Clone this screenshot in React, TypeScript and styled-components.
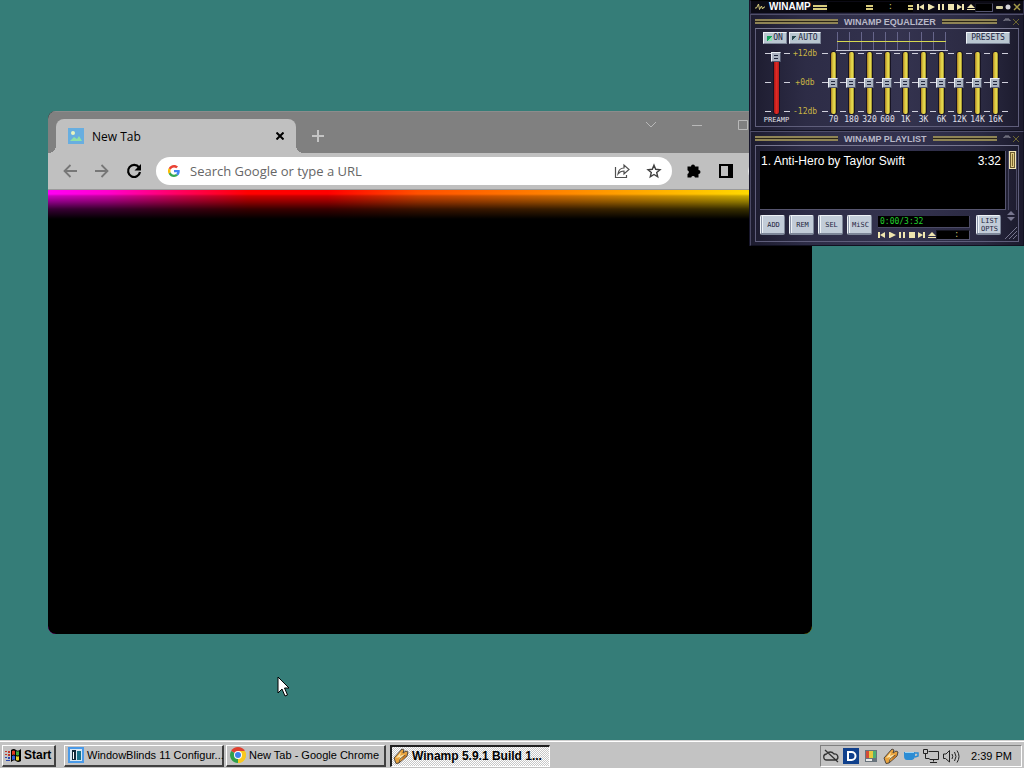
import React from "react";
import styled, { createGlobalStyle, css } from "styled-components";

const GlobalStyle = createGlobalStyle`
  *, *::before, *::after { box-sizing: border-box; }
  body { margin: 0; overflow: hidden; font-family: "Liberation Sans", Arial, sans-serif; }
  button, input { font: inherit; color: inherit; margin: 0; padding: 0; border: 0; background: none; }
  svg { display: block; flex: none; }
`;

const Screen = styled.div`
  display: flex;
  flex-direction: column;
  min-height: 100vh;
  background: #357d78;
`;
const Desktop = styled.main`
  position: relative;
  flex: 1;
`;
const Pointer = styled.svg`
  position: absolute;
  left: 277px;
  top: 676px;
`;

/* ---------- Browser ---------- */
const BrowserWindow = styled.section`
  position: absolute;
  inset: 111px 212px 106px 48px;
  display: flex;
  flex-direction: column;
  border-radius: 8px;
  overflow: hidden;
  background: #000;
  font-family: "Open Sans", "Noto Sans", sans-serif;
`;
const TabStrip = styled.div`
  display: flex;
  align-items: flex-end;
  height: 42px;
  padding: 0 8px;
  background: #808080;
  border-top: 1px solid #8c8c8c;
`;
const Tab = styled.div`
  position: relative;
  display: flex;
  align-items: center;
  gap: 8px;
  width: 240px;
  height: 34px;
  padding: 0 8px 0 12px;
  border-radius: 8px 8px 0 0;
  background: #c0c0c0;
  color: #000;
  font-size: 12px;
  &::before, &::after {
    content: "";
    position: absolute;
    bottom: 0;
    width: 8px;
    height: 8px;
  }
  &::before { left: -8px; background: radial-gradient(circle at 0 0, transparent 8px, #c0c0c0 8px); }
  &::after { right: -8px; background: radial-gradient(circle at 100% 0, transparent 8px, #c0c0c0 8px); }
`;
const TabTitle = styled.span`
  flex: 1;
`;
const IconButton = styled.button<{ $w?: number; $h?: number }>`
  display: flex;
  align-items: center;
  justify-content: center;
  flex: none;
  width: ${(p) => p.$w ?? 32}px;
  height: ${(p) => p.$h ?? 28}px;
`;
const Caption = styled.div`
  display: flex;
  align-self: flex-start;
  margin-left: auto;
`;
const Toolbar = styled.div`
  display: flex;
  align-items: center;
  height: 37px;
  padding: 0 6px;
  background: #c0c0c0;
  border-bottom: 1px solid #9a9a9a;
`;
const Omnibox = styled.label`
  display: flex;
  align-items: center;
  flex: 1;
  height: 28px;
  margin: 0 6px;
  padding: 0 2px 0 12px;
  border-radius: 14px;
  background: #fff;
`;
const UrlInput = styled.input`
  flex: 1;
  min-width: 0;
  margin-left: 10px;
  font-size: 13px;
  outline: 0;
  &::placeholder { color: #666; opacity: 1; }
`;
const Page = styled.div`
  flex: 1;
  background:
    linear-gradient(to bottom, transparent 0, transparent 4px, rgba(0, 0, 0, 0.22) 6px, rgba(0, 0, 0, 0.46) 12px, rgba(0, 0, 0, 0.78) 19px, #000 29px),
    linear-gradient(to right, #ff00f5 0, #f0c 60px, #ff0060 130px, #f00 200px, #f00 280px, #ff5000 370px, #ff8800 520px, #ffd800 700px, #ff0 764px);
`;
const Avatar = styled.span`
  width: 20px;
  height: 20px;
  margin: 0 6px;
  border-radius: 10px;
  background: #e8e8e8;
`;

/* ---------- Winamp ---------- */
const pixelFont = css`
  font-family: "DejaVu Sans Mono", monospace;
`;
const WinampStack = styled.div`
  position: absolute;
  top: 0;
  right: 0;
  width: 275px;
  padding-left: 1px;
  background: #16152a;
  color: #e4e4ee;
`;
const ShadeBar = styled.header`
  display: flex;
  align-items: center;
  height: 14px;
  padding: 0 2px 0 4px;
  background: #0b0a14;
  border: 1px solid #2c2b44;
  border-top-color: #000;
`;
const ShadeName = styled.h1`
  margin: 0 2px 0 4px;
  width: 42px;
  color: #fff;
  font-size: 10px;
  line-height: 12px;
  font-weight: bold;
`;
const GoldBar = styled.span<{ $w: number }>`
  flex: none;
  width: ${(p) => p.$w}px;
  height: 5px;
  border: solid #d8cb7c;
  border-width: 2px 0;
`;
const ShadeScope = styled.div`
  display: flex;
  align-items: center;
  flex: 1;
  justify-content: space-between;
  height: 10px;
  padding-left: 39px;
  background: #000;
`;
const Colon = styled.span`
  ${pixelFont}
  color: #c9c172;
  font-size: 8px;
  line-height: 10px;
`;
const SeekBox = styled.span<{ $w: number; $h: number }>`
  display: flex;
  align-items: center;
  justify-content: flex-end;
  width: ${(p) => p.$w}px;
  height: ${(p) => p.$h}px;
  padding-right: 10px;
  background: #000;
  border: 1px solid;
  border-color: #15151f #555570 #555570 #15151f;
`;
const ControlRow = styled.div`
  display: flex;
  align-items: center;
  gap: 2px;
`;
const Transport = styled.button`
  display: flex;
  width: 8px;
  height: 8px;
  align-items: center;
  justify-content: center;
`;

const Panel = styled.section`
  padding: 0 4px 3px 4px;
  border: 1px solid #111120;
  border-left-color: #4a4964;
  border-top-color: #504f6a;
  background: linear-gradient(to right, #1d1c2f 0, #2d2c46 20%, #34334f 55%, #2a2941 85%, #1b1a2c 100%);
`;
const PanelTitle = styled.header`
  display: flex;
  align-items: center;
  height: 13px;
  gap: 6px;
`;
const PanelName = styled.h2`
  margin: 0;
  color: #b9b9c8;
  font-size: 9px;
  line-height: 12px;
  font-weight: bold;
`;
const Rule = styled.span<{ $w?: number }>`
  flex: ${(p) => (p.$w ? `0 0 ${p.$w}px` : "1")};
  height: 5px;
  background: #2a2416;
  border: solid #8f8455;
  border-width: 2px 0;
`;
const Frame = styled.div`
  border: 1px solid #5f5e7b;
  border-top-color: #77768f;
`;
const EqTop = styled.div`
  display: flex;
  align-items: flex-start;
  height: 21px;
  padding: 3px 6px 0 7px;
`;
const SkinButton = styled.button<{ $w: number; $h?: number }>`
  ${pixelFont}
  display: flex;
  align-items: center;
  justify-content: center;
  gap: 1px;
  flex: none;
  width: ${(p) => p.$w}px;
  height: ${(p) => p.$h ?? 12}px;
  margin-right: 2px;
  border: 1px solid;
  border-color: #eef2f6 #7d8698 #7d8698 #eef2f6;
  background: #b9c6d0;
  color: #1e2540;
  font-size: 8px;
  line-height: 8px;
`;
const Led = styled.span<{ $on?: boolean }>`
  width: 5px;
  height: 5px;
  background: ${(p) => (p.$on ? "linear-gradient(135deg, #12a05a 55%, #8de0b0 55%)" : "linear-gradient(135deg, #2c4a50 50%, #b0c4cc 50%)")};
`;
const Graph = styled.svg`
  margin: 0 auto 0 13px;
`;
const EqBody = styled.div`
  display: flex;
  align-items: flex-start;
  height: 76px;
  padding-left: 9px;
`;
const ticks = (x: number) => css`
  background:
    linear-gradient(#d0d0dc, #d0d0dc) ${x}px 3px / 6px 1px no-repeat,
    linear-gradient(#d0d0dc, #d0d0dc) ${x}px 32px / 6px 1px no-repeat,
    linear-gradient(#d0d0dc, #d0d0dc) ${x}px 61px / 6px 1px no-repeat;
`;
const Band = styled.label`
  ${pixelFont}
  display: flex;
  flex-direction: column;
  align-items: center;
  width: 18px;
  padding-left: 5px;
  ${ticks(0)}
  color: #e0e0ea;
  font-size: 8px;
  line-height: 10px;
  white-space: nowrap;
`;
const Preamp = styled(Band)`
  width: 25px;
  padding: 0 2px 0 0;
  font-size: 7px;
  background:
    linear-gradient(to right, #d0d0dc 6px, transparent 6px, transparent 19px, #d0d0dc 19px) 0 3px / 25px 1px no-repeat,
    linear-gradient(to right, #d0d0dc 6px, transparent 6px, transparent 19px, #d0d0dc 19px) 0 32px / 25px 1px no-repeat,
    linear-gradient(to right, #d0d0dc 6px, transparent 6px, transparent 19px, #d0d0dc 19px) 0 61px / 25px 1px no-repeat;
`;
const EndTicks = styled.span`
  width: 6px;
  height: 66px;
  ${ticks(0)}
`;
const Fader = styled.input<{ $red?: boolean }>`
  appearance: none;
  writing-mode: vertical-lr;
  direction: rtl;
  width: 12px;
  height: 64px;
  margin: 1px 0 0;
  &::-webkit-slider-runnable-track {
    width: 7px;
    height: 64px;
    margin: 0 auto;
    border: 1px solid #171424;
    border-radius: 3px;
    background: ${(p) => (p.$red ? "linear-gradient(to right, #a81818, #e02a24 50%, #b81c1c)" : "linear-gradient(to right, #a87a20, #dccb44 40%, #e4d84c 70%, #8c7e28)")};
  }
  &::-webkit-slider-thumb {
    appearance: none;
    width: 10px;
    height: 10px;
    margin-left: -3px;
    border: 1px solid;
    border-color: #e8ecf2 #50566c #50566c #e8ecf2;
    background:
      linear-gradient(#20263c, #20263c) 50% 2px / 4px 1px no-repeat,
      linear-gradient(#20263c, #20263c) 50% 5px / 4px 1px no-repeat,
      #aab2c0;
  }
`;
const DbScale = styled.div`
  ${pixelFont}
  display: flex;
  flex-direction: column;
  justify-content: space-between;
  width: 29px;
  height: 67px;
  margin: -1px 0 0 3px;
  color: #c9b444;
  font-size: 8px;
  line-height: 9px;
`;
const DbLabel = styled.span`
  width: 24px;
  text-align: center;
`;

const PlaylistBody = styled.div`
  display: flex;
  padding: 5px 1px 0 4px;
`;
const TrackList = styled.ol`
  flex: 1;
  height: 59px;
  margin: 0;
  padding: 2px 4px 0 1px;
  list-style: none;
  background: #000;
  border: solid #55546e;
  border-width: 0 1px 1px 0;
  color: #fff;
  font-size: 12px;
  line-height: 16px;
`;
const Track = styled.li`
  display: flex;
  justify-content: space-between;
`;
const ScrollTrack = styled.div`
  width: 9px;
  margin-left: 2px;
  border: solid #4a4963;
  border-width: 0 1px;
`;
const ScrollThumb = styled.button`
  display: block;
  width: 7px;
  height: 18px;
  background: linear-gradient(#7c6830, #7c6830) 50% 50% / 1px 12px no-repeat, #e0cb84;
  border: 1px solid #f2e6b4;
  outline: 1px solid #6a5a30;
  outline-offset: -2px;
`;
const PlaylistFoot = styled.div`
  display: flex;
  align-items: flex-start;
  height: 31px;
  padding: 5px 1px 0 4px;
`;
const MenuButton = styled(SkinButton)`
  height: 20px;
  margin-right: 4px;
  padding-left: 2px;
  border-width: 1px 1px 2px 1px;
  border-radius: 2px;
  background: linear-gradient(to right, #8b95a8 0, #8b95a8 1px, #eef2f6 1px, #eef2f6 2px, #c2ccd8 2px);
  font-size: 7px;
  white-space: pre-line;
`;
const Readout = styled.div`
  display: flex;
  flex-direction: column;
  gap: 2px;
  margin: 1px 6px 0 2px;
  width: 93px;
`;
const TimeBox = styled.output`
  ${pixelFont}
  height: 12px;
  padding-left: 2px;
  background: #000;
  border: solid #4c4b66;
  border-width: 0 1px 1px 0;
  color: #22d02c;
  font-size: 8px;
  line-height: 11px;
`;
const FootControls = styled.div`
  display: flex;
  align-items: center;
  justify-content: space-between;
`;
const Corner = styled.div`
  display: flex;
  flex-direction: column;
  align-items: center;
  gap: 5px;
  margin: -4px 0 0 auto;
`;

/* ---------- Taskbar ---------- */
const Taskbar = styled.footer`
  display: flex;
  align-items: center;
  height: 28px;
  padding: 3px 2px 1px;
  background: #c3c3c3;
  border-top: 1px solid #d0d0d0;
  box-shadow: inset 0 1px 0 #fff;
  font-size: 11px;
  color: #000;
`;
const TaskButton = styled.button<{ $active?: boolean; $start?: boolean }>`
  display: flex;
  align-items: center;
  gap: ${(p) => (p.$start ? 2 : 3)}px;
  flex: 0 1 ${(p) => (p.$start ? 54 : 160)}px;
  min-width: 0;
  height: 22px;
  margin-right: ${(p) => (p.$start ? 8 : 2)}px;
  padding: 0 3px;
  border: solid;
  border-width: 1px 2px 2px 1px;
  border-color: #fff #404040 #404040 #fff;
  background: #c3c3c3;
  white-space: nowrap;
  ${(p) => p.$start && css`padding: 0 1px 0 2px; font-weight: bold; font-size: 12px;`}
  ${(p) =>
    p.$active &&
    css`
      margin-left: 2px;
      padding-left: 1px;
      border-width: 2px 1px 1px 2px;
      border-color: #202020 #fff #fff #202020;
      background: repeating-conic-gradient(#fff 0 25%, #c8c8c8 0 50%) 0 0 / 2px 2px;
      font-weight: bold;
      font-size: 12px;
    `}
`;
const Tray = styled.div`
  display: flex;
  align-items: center;
  gap: 4px;
  height: 22px;
  margin-left: auto;
  padding: 0 9px 0 2px;
  border: 1px solid;
  border-color: #808080 #fff #fff #808080;
`;
const Clock = styled.time`
  margin-left: 7px;
`;

const NoteIcon = () => (
  <svg width="16" height="16" viewBox="0 0 16 16">
    <path d="M1 10 9 1l2 1-1 3 3-2 2 1-1 4-8 7-3 .500z" fill="#e8a23c" stroke="#4e463e" />
    <path d="M3 10 8 4 7 8l5-2-6 7 1-4z" fill="#ffe6a8" />
    <path d="M10 9l3.500-3-.5 3-5 4z" fill="#c77a24" />
    <path d="M6 15l1-4 5-4" fill="none" stroke="#4e463e" strokeWidth=".8" />
  </svg>
);
const Transports = () => {
  const shapes: [string, string][] = [
    ["Previous", "M0 1h2v6H0zM7 1v6L2 4z"],
    ["Play", "M1 1h1l6 3-6 3H1z"],
    ["Pause", "M1 1h2v6H1zM5 1h2v6H5z"],
    ["Stop", "M1 1h6v6H1z"],
    ["Next", "M5 1h2v6H5zM0 1l5 3-5 3z"],
    ["Eject", "M4 1l4 4H0zM0 6h8v1H0z"],
  ];
  return (
    <ControlRow>
      {shapes.map(([name, d]) => (
        <Transport key={name} aria-label={name}>
          <svg width="8" height="8" viewBox="0 0 8 8"><path d={d} fill="#f0e6b0" /></svg>
        </Transport>
      ))}
    </ControlRow>
  );
};
const PanelButtons = () => (
  <svg width="16" height="10" viewBox="0 0 16 10">
    <path d="M1 4V3h6v1M2 2h4" fill="none" stroke="#8a8a96" />
    <path d="m10 2 6 6m0-6-6 6" stroke="#6c6530" />
  </svg>
);

export default function App() {
  const bands = ["70", "180", "320", "600", "1K", "3K", "6K", "12K", "14K", "16K"];
  return (
    <>
      <GlobalStyle />
      <Screen>
        <Desktop>
          <BrowserWindow aria-label="New Tab">
            <TabStrip>
              <Tab>
                <svg width="16" height="16" viewBox="0 0 16 16">
                  <rect width="16" height="16" fill="#68aee0" />
                  <circle cx="5" cy="5" r="2" fill="#e8f4c0" />
                  <path d="M2 13 6 9l3 2 2-3 3 5z" fill="#8fe0a8" />
                </svg>
                <TabTitle>New Tab</TabTitle>
                <IconButton $w={16} $h={16} aria-label="Close tab">
                  <svg width="8" height="8" viewBox="0 0 8 8"><path d="m.5.5 7 7m0-7-7 7" stroke="#000" strokeWidth="2" /></svg>
                </IconButton>
              </Tab>
              <IconButton $w={44} $h={34} aria-label="New tab">
                <svg width="12" height="12" viewBox="0 0 12 12"><path d="M6 0v12M0 6h12" stroke="#c4c4c4" strokeWidth="2" /></svg>
              </IconButton>
              <Caption>
                <IconButton $w={46} $h={26} aria-label="Search tabs">
                  <svg width="12" height="8" viewBox="0 0 12 8"><path d="m1 1 5 5 5-5" fill="none" stroke="#b8b8b8" /></svg>
                </IconButton>
                <IconButton $w={46} $h={26} aria-label="Minimize">
                  <svg width="10" height="8" viewBox="0 0 10 8"><path d="M0 4.500h10" stroke="#b8b8b8" /></svg>
                </IconButton>
                <IconButton $w={46} $h={26} aria-label="Maximize">
                  <svg width="10" height="10" viewBox="0 0 10 10"><path d="M.5.5h9v9h-9z" fill="none" stroke="#b8b8b8" /></svg>
                </IconButton>
                <IconButton $w={38} $h={26} aria-label="Close">
                  <svg width="10" height="10" viewBox="0 0 10 10"><path d="m0 0 10 10m0-10L0 10" stroke="#b8b8b8" /></svg>
                </IconButton>
              </Caption>
            </TabStrip>
            <Toolbar>
              <IconButton aria-label="Back">
                <svg width="16" height="16" viewBox="0 0 16 16"><path d="M15 8H2m6.500-6L2.500 8l6 6" fill="none" stroke="#777" strokeWidth="1.800" /></svg>
              </IconButton>
              <IconButton aria-label="Forward">
                <svg width="16" height="16" viewBox="0 0 16 16"><path d="M1 8h13M7.500 2l6 6-6 6" fill="none" stroke="#777" strokeWidth="1.800" /></svg>
              </IconButton>
              <IconButton aria-label="Reload">
                <svg width="16" height="16" viewBox="0 0 16 16">
                  <path d="M13 4.500A6 6 0 1 0 14 9" fill="none" stroke="#000" strokeWidth="2.200" />
                  <path d="M15 1v6.500H8.500z" fill="#000" />
                </svg>
              </IconButton>
              <Omnibox>
                <svg width="12" height="12" viewBox="0 0 48 48">
                  <path fill="#ea4335" d="M24 9.500c3.500 0 6.700 1.200 9.200 3.600l6.900-6.900C35.900 2.400 30.500 0 24 0 14.600 0 6.500 5.400 2.600 13.200l8 6.200C12.400 13.700 17.700 9.500 24 9.500z" />
                  <path fill="#4285f4" d="M47 24.600c0-1.600-.2-3.100-.4-4.600H24v9h12.900c-.6 3-2.200 5.500-4.700 7.200l7.700 6C44.400 38 47 31.800 47 24.600z" />
                  <path fill="#fbbc05" d="M10.500 28.600a14.500 14.500 0 0 1 0-9.200l-8-6.200a24 24 0 0 0 0 21.600z" />
                  <path fill="#34a853" d="M24 48c6.500 0 12-2.100 15.900-5.800l-7.700-6c-2.200 1.500-4.900 2.300-8.200 2.300-6.300 0-11.600-4.200-13.500-9.900l-8 6.200C6.500 42.600 14.600 48 24 48z" />
                </svg>
                <UrlInput aria-label="Address and search" placeholder="Search Google or type a URL" />
                <IconButton aria-label="Share">
                  <svg width="16" height="16" viewBox="0 0 16 16" fill="none" stroke="#505050" strokeWidth="1.200">
                    <path d="M1.500 4v10.500h11V12" />
                    <path d="M4 11c.5-4 2.500-6 6-6V2l5 4.500-5 4.500V8c-3 0-4.500 1-6 3z" />
                  </svg>
                </IconButton>
                <IconButton aria-label="Bookmark">
                  <svg width="16" height="16" viewBox="0 0 16 16"><path d="m8 2.200 1.700 4.100 4.300.4-3.300 2.800 1 4.300L8 11.500l-3.700 2.300 1-4.300L2 6.700l4.300-.4z" fill="none" stroke="#404040" strokeWidth="1.400" /></svg>
                </IconButton>
              </Omnibox>
              <IconButton aria-label="Extensions">
                <svg width="16" height="16" viewBox="0 0 16 16"><path d="M5 3.500a2 2 0 0 1 4 0h3.500V7a2 2 0 0 1 0 4v3.500H9a2 2 0 0 0-3.800 0H1.500V11a2 2 0 0 0 0-3.800V3.500z" fill="#000" /></svg>
              </IconButton>
              <IconButton aria-label="Side panel">
                <svg width="14" height="14" viewBox="0 0 14 14"><path d="M0 0h14v14H0zM2 2v10h7V2z" fill="#000" fillRule="evenodd" /></svg>
              </IconButton>
              <Avatar />
              <IconButton aria-label="Menu">
                <svg width="4" height="14" viewBox="0 0 4 14"><path d="M1 1h2v2H1zM1 6h2v2H1zM1 11h2v2H1z" /></svg>
              </IconButton>
            </Toolbar>
            <Page />
          </BrowserWindow>

          <WinampStack>
            <ShadeBar>
              <svg width="10" height="10" viewBox="0 0 10 10"><path d="M0 6h1.500L3.500 2l1 5.500L6.500 4l1 3L9 5h1" fill="none" stroke="#d8cb7c" /></svg>
              <ShadeName>WINAMP</ShadeName>
              <GoldBar $w={14} />
              <ShadeScope>
                <GoldBar $w={7} />
                <Colon>:</Colon>
                <GoldBar $w={5} />
              </ShadeScope>
              <svg width="4" height="4" />
              <Transports />
              <SeekBox $w={18} $h={9} />
              <svg width="28" height="10" viewBox="0 0 28 10">
                <rect x="3" y="4" width="7" height="3" rx="1" fill="#d8d2a0" />
                <circle cx="15" cy="5" r="2.500" fill="#d4d4d8" />
                <path d="m21 2 6 6m0-6-6 6" stroke="#a39a48" strokeWidth="1.500" />
              </svg>
            </ShadeBar>

            <Panel>
              <PanelTitle>
                <Rule $w={83} />
                <PanelName>WINAMP EQUALIZER</PanelName>
                <Rule />
                <PanelButtons />
              </PanelTitle>
              <Frame>
                <EqTop>
                  <SkinButton $w={24}><Led $on />ON</SkinButton>
                  <SkinButton $w={32}><Led />AUTO</SkinButton>
                  <Graph width="112" height="19" viewBox="0 0 112 19">
                    <path d="M1.500 0v18M13.500 0v18M25.500 0v18M37.500 0v18M49.500 0v18M61.500 0v18M73.500 0v18M85.500 0v18M97.500 0v18M109.500 0v18" stroke="#66658a" />
                    <path d="M1 9.500h109" stroke="#d6d850" />
                    <path d="M0 18.500h112" stroke="#c8c8d8" />
                  </Graph>
                  <SkinButton $w={44}>PRESETS</SkinButton>
                </EqTop>
                <EqBody>
                  <Preamp>
                    <Fader type="range" $red defaultValue={100} />
                    PREAMP
                  </Preamp>
                  <DbScale>
                    <DbLabel>+12db</DbLabel>
                    <DbLabel>+0db</DbLabel>
                    <DbLabel>-12db</DbLabel>
                  </DbScale>
                  {bands.map((b) => (
                    <Band key={b}>
                      <Fader type="range" defaultValue={50} />
                      {b}
                    </Band>
                  ))}
                  <EndTicks />
                </EqBody>
              </Frame>
            </Panel>

            <Panel>
              <PanelTitle>
                <Rule $w={83} />
                <PanelName>WINAMP PLAYLIST</PanelName>
                <Rule />
                <PanelButtons />
              </PanelTitle>
              <Frame>
                <PlaylistBody>
                  <TrackList>
                    <Track><span>1. Anti-Hero by Taylor Swift</span><span>3:32</span></Track>
                  </TrackList>
                  <ScrollTrack><ScrollThumb aria-label="Scroll" /></ScrollTrack>
                </PlaylistBody>
                <PlaylistFoot>
                  <MenuButton $w={25} $h={20}>ADD</MenuButton>
                  <MenuButton $w={25} $h={20}>REM</MenuButton>
                  <MenuButton $w={25} $h={20}>SEL</MenuButton>
                  <MenuButton $w={25} $h={20}>MiSC</MenuButton>
                  <Readout>
                    <TimeBox>0:00/3:32</TimeBox>
                    <FootControls>
                      <Transports />
                      <SeekBox $w={34} $h={10}><Colon>:</Colon></SeekBox>
                    </FootControls>
                  </Readout>
                  <MenuButton $w={25} $h={20}>{"LIST\nOPTS"}</MenuButton>
                  <Corner>
                    <svg width="8" height="10" viewBox="0 0 8 10"><path d="m4 0 4 4H0zM0 6h8l-4 4z" fill="#77768e" /></svg>
                    <svg width="12" height="13" viewBox="0 0 12 13"><path d="M0 13 12 1M4 13l8-8M8 13l4-4" stroke="#77768e" /></svg>
                  </Corner>
                </PlaylistFoot>
              </Frame>
            </Panel>
          </WinampStack>

          <Pointer width="14" height="22" viewBox="0 0 14 22">
            <path d="M1 1v16l4-4 3 7 2.500-1-3-7H12z" fill="#fff" stroke="#000" />
          </Pointer>
        </Desktop>

        <Taskbar>
          <TaskButton $start>
            <svg width="17" height="16" viewBox="0 0 17 16">
              <path d="M6 3q3-2 5 0t5-1v12q-3 2-5 0t-5 1z" fill="#000" />
              <path d="M7 4q2-1 3 0v4q-1-1-3 0z" fill="#e33a20" />
              <path d="M11 4q2 1 3 0v4q-1 1-3 0z" fill="#3eaa3e" />
              <path d="M7 9q2-1 3 0v4q-1-1-3 0z" fill="#3060d8" />
              <path d="M11 9q2 1 3 0v4q-1 1-3 0z" fill="#e8d030" />
              <path d="M0 4h2v1H0zM3 4h2v2H3zM0 7h2v1H0zM3 7h2v2H3z" fill="#c03828" />
              <path d="M0 10h2v1H0zM3 10h2v2H3zM1 13h4v1H1z" fill="#2848b0" />
            </svg>
            Start
          </TaskButton>
          <TaskButton>
            <svg width="16" height="16" viewBox="0 0 16 16">
              <rect width="16" height="16" fill="#4a9ae8" />
              <path d="M2 2h12v12H2z" fill="#d8e8f4" />
              <path d="M4 3h4v10H4z" fill="#102838" />
              <path d="M9 4h4v9H9z" fill="#187088" />
              <path d="M5 5h1v7H5z" fill="#fff" />
            </svg>
            WindowBlinds 11 Configur...
          </TaskButton>
          <TaskButton>
            <svg width="16" height="16" viewBox="0 0 16 16">
              <path d="M8 8 1.100 4A8 8 0 0 1 14.900 4z" fill="#e0402f" />
              <path d="M8 8 14.900 4A8 8 0 0 1 8 16z" fill="#f8c821" />
              <path d="M8 8v8A8 8 0 0 1 1.100 4z" fill="#2fa04c" />
              <path d="M8 4h6.900a8 8 0 0 1-6.900 12l3.500-6z" fill="#f8c821" />
              <circle cx="8" cy="8" r="4" fill="#fff" />
              <circle cx="8" cy="8" r="3" fill="#3f80e8" />
            </svg>
            New Tab - Google Chrome
          </TaskButton>
          <TaskButton $active>
            <NoteIcon />
            Winamp 5.9.1 Build 1...
          </TaskButton>
          <Tray>
            <svg width="16" height="16" viewBox="0 0 16 16" fill="none" stroke="#333" strokeWidth="1.300">
              <path d="M4 12a3 3 0 0 1-.5-6A4.500 4.500 0 0 1 11 6a3 3 0 0 1 1.500 6zM2 2l13 12" />
            </svg>
            <svg width="16" height="16" viewBox="0 0 16 16">
              <rect width="16" height="16" fill="#10408c" />
              <path d="M5 4h3.500a4 4 0 0 1 0 8H5z" fill="none" stroke="#fff" strokeWidth="2" />
            </svg>
            <svg width="16" height="16" viewBox="0 0 16 16">
              <path d="M2 2h12v12H2z" fill="#68737c" />
              <path d="M3 3h3v7H3z" fill="#d24c38" /><path d="M6 3h4v7H6z" fill="#e8c83c" /><path d="M10 3h3v7h-3z" fill="#50b070" />
              <path d="M3 11h6v2H3z" fill="#e8e8e8" />
            </svg>
            <NoteIcon />
            <svg width="16" height="16" viewBox="0 0 16 16">
              <path d="M1 4h11v5q-1 3-3 3H4Q1 12 1 8z" fill="#2b8cd4" />
              <path d="M12 5h3v3l-3 1" fill="none" stroke="#2b8cd4" strokeWidth="1.500" />
              <path d="M2 4h9v1H2z" fill="#9cd4f4" />
            </svg>
            <svg width="16" height="16" viewBox="0 0 16 16" fill="none" stroke="#222">
              <path d="M5.500 3.500h10v8h-9M10.500 11.500v2M7 14.500h7M.5 1.500h4v4h-4zM2.500 5.500v5h4" />
            </svg>
            <svg width="17" height="16" viewBox="0 0 17 16" fill="none" stroke="#222">
              <path d="M.5 6v4.500h2l4 3.500V2.500L3 6zM9 6q1.500 2.500 0 5M11.500 4q3 4.500 0 9M14 2.500q4 6 0 12" />
            </svg>
            <Clock>2:39 PM</Clock>
          </Tray>
        </Taskbar>
      </Screen>
    </>
  );
}
